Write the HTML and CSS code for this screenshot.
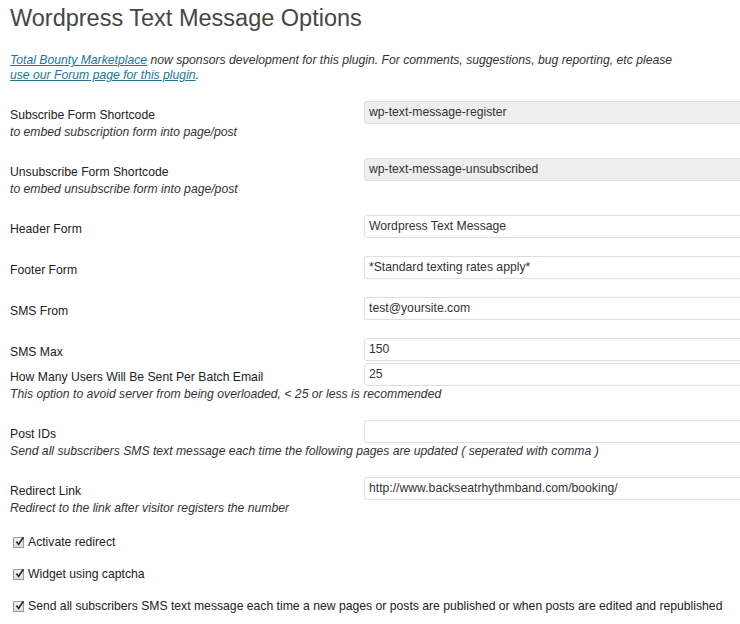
FILE: index.html
```html
<!DOCTYPE html>
<html>
<head>
<meta charset="utf-8">
<link rel="stylesheet" href="styles.css">
</head>
<body>
<div class="wrap">
  <h2 class="title">Wordpress Text Message Options</h2>
  <p class="sponsor"><a href="#">Total Bounty Marketplace</a> now sponsors development for this plugin. For comments, suggestions, bug reporting, etc please<br><a href="#">use our Forum page for this plugin</a>.</p>

  <div class="group">
    <div class="row"><label class="label">Subscribe Form Shortcode</label><div class="input readonly">wp-text-message-register</div></div>
    <div class="desc">to embed subscription form into page/post</div>
  </div>

  <div class="group">
    <div class="row"><label class="label">Unsubscribe Form Shortcode</label><div class="input readonly">wp-text-message-unsubscribed</div></div>
    <div class="desc">to embed unsubscribe form into page/post</div>
  </div>

  <div class="group">
    <div class="row"><label class="label">Header Form</label><div class="input">Wordpress Text Message</div></div>
  </div>

  <div class="group">
    <div class="row"><label class="label">Footer Form</label><div class="input">*Standard texting rates apply*</div></div>
  </div>

  <div class="group">
    <div class="row"><label class="label">SMS From</label><div class="input">test@yoursite.com</div></div>
  </div>

  <div class="group">
    <div class="row"><label class="label">SMS Max</label><div class="input">150</div></div>
    <div class="row"><label class="label">How Many Users Will Be Sent Per Batch Email</label><div class="input">25</div></div>
    <div class="desc">This option to avoid server from being overloaded, &lt; 25 or less is recommended</div>
  </div>

  <div class="group">
    <div class="row"><label class="label">Post IDs</label><div class="input"></div></div>
    <div class="desc">Send all subscribers SMS text message each time the following pages are updated ( seperated with comma )</div>
  </div>

  <div class="group">
    <div class="row"><label class="label">Redirect Link</label><div class="input">http://www.backseatrhythmband.com/booking/</div></div>
    <div class="desc">Redirect to the link after visitor registers the number</div>
  </div>

  <div class="checks">
    <div class="check"><span class="box"><svg width="11" height="11" viewBox="0 0 11 11"><path d="M2.5 5.5 L4.6 8.4 L9.4 1.2" fill="none" stroke="#222" stroke-width="1.6"/></svg></span>Activate redirect</div>
    <div class="check"><span class="box"><svg width="11" height="11" viewBox="0 0 11 11"><path d="M2.5 5.5 L4.6 8.4 L9.4 1.2" fill="none" stroke="#222" stroke-width="1.6"/></svg></span>Widget using captcha</div>
    <div class="check"><span class="box"><svg width="11" height="11" viewBox="0 0 11 11"><path d="M2.5 5.5 L4.6 8.4 L9.4 1.2" fill="none" stroke="#222" stroke-width="1.6"/></svg></span>Send all subscribers SMS text message each time a new pages or posts are published or when posts are edited and republished</div>
  </div>
</div>
</body>
</html>
```

FILE: styles.css
```css
html, body {
  margin: 0;
  padding: 0;
  background: #fff;
}
body {
  font-family: "Liberation Sans", Arial, sans-serif;
  font-size: 12.2px;
  color: #333;
  width: 740px;
  overflow: hidden;
}
.wrap {
  padding-left: 10px;
}
.title {
  font-size: 23.5px;
  font-weight: normal;
  color: #464646;
  line-height: 29px;
  margin: 4px 0 0 0;
  padding: 0;
}
.sponsor {
  font-style: italic;
  line-height: 15px;
  margin: 20px 0 0 0;
  color: #333;
}
.sponsor a {
  color: #21759b;
  text-decoration: underline;
}
.sponsor + .group {
  margin-top: 18px;
}
.group {
  margin-bottom: 18px;
}
.row {
  display: flex;
  align-items: flex-start;
}
.row + .row {
  margin-top: 2px;
}
.label {
  width: 354px;
  flex: 0 0 354px;
  padding-top: 7px;
  line-height: 15px;
  color: #222;
}
.input {
  flex: 0 0 400px;
  height: 23px;
  box-sizing: border-box;
  border: 1px solid #dfdfdf;
  border-radius: 3px;
  padding: 0 4px;
  line-height: 21px;
  color: #333;
  background: #fff;
  white-space: nowrap;
}
.input.readonly {
  background: #eee;
}
.desc {
  font-style: italic;
  line-height: 15px;
  margin-top: 1px;
  color: #333;
}
.checks {
  margin-top: 1px;
}
.check {
  display: flex;
  align-items: center;
  line-height: 16px;
  height: 16px;
  margin-bottom: 16px;
  color: #222;
  white-space: nowrap;
}
.check + .check {
  margin-top: 0.5px;
}
.box {
  display: inline-flex;
  flex: 0 0 11px;
  width: 11px;
  height: 11px;
  box-sizing: border-box;
  border: 1px solid #999;
  background: linear-gradient(#f4f4f4, #ddd);
  margin: 0 4px 0 3px;
  position: relative;
}
.box svg {
  position: absolute;
  left: 0;
  top: -2px;
}
```
